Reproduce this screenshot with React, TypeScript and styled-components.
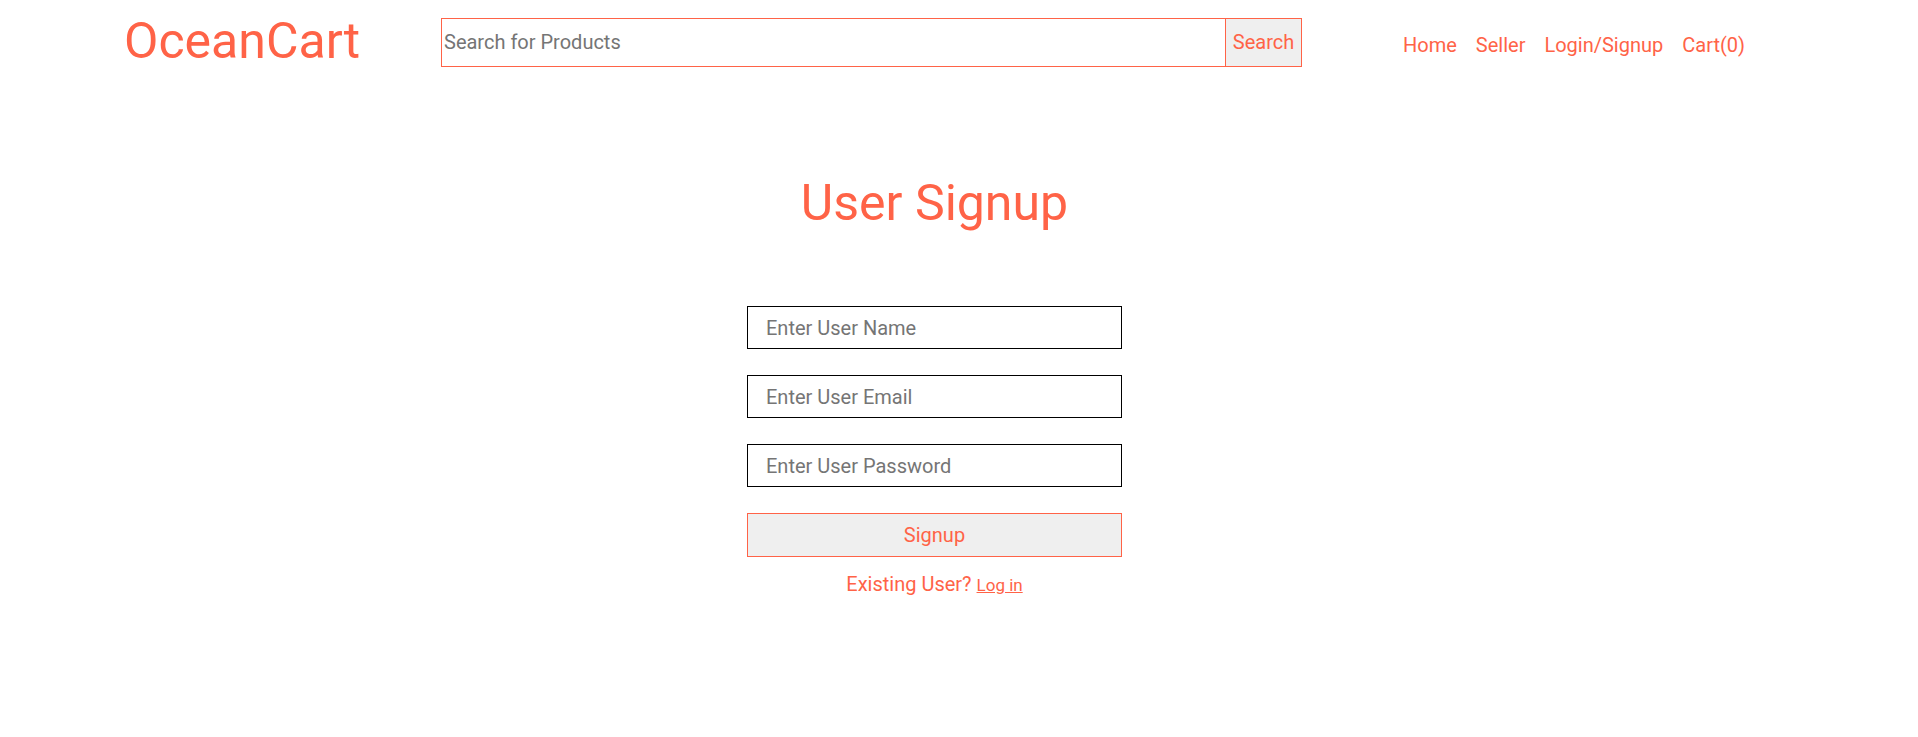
import React from "react";
import styled, { createGlobalStyle } from "styled-components";

const ACCENT = "#ff6347";

const GlobalStyle = createGlobalStyle`
  html, body { margin: 0; padding: 0; background: #fff; }
  body { font-family: Roboto, "Liberation Sans", sans-serif; }
  * { box-sizing: border-box; }
  input::placeholder { color: #757575; opacity: 1; }
`;

const Header = styled.header`
  display: flex;
  align-items: center;
  height: 84px;
  padding-left: 124px;
`;

const Logo = styled.div`
  font-size: 50px;
  color: ${ACCENT};
  width: 317px;
  margin-top: -2px;
`;

const SearchForm = styled.form`
  display: flex;
  width: 861px;
  height: 49px;
  border: 1px solid ${ACCENT};
`;

const SearchInput = styled.input`
  flex: 1;
  border: none;
  outline: none;
  font-family: inherit;
  font-size: 20px;
  padding: 0 2px;
  color: #333;
  background: #fff;
`;

const SearchButton = styled.button`
  width: 76px;
  border: none;
  border-left: 1px solid ${ACCENT};
  background: #efefef;
  color: ${ACCENT};
  font-family: inherit;
  font-size: 20px;
  padding: 0;
  cursor: pointer;
`;

const Nav = styled.nav`
  display: flex;
  gap: 19px;
  margin-left: 101px;
  margin-top: 6px;
`;

const NavLink = styled.a`
  color: ${ACCENT};
  font-size: 20px;
  text-decoration: none;
`;

const Main = styled.main`
  display: flex;
  flex-direction: column;
  align-items: center;
  padding-right: 49px;
`;

const Title = styled.h1`
  font-weight: 400;
  font-size: 50px;
  color: ${ACCENT};
  margin: 89px 0 0;
  line-height: 60px;
`;

const Form = styled.form`
  display: flex;
  flex-direction: column;
  width: 375px;
  gap: 26px;
  margin-top: 73px;
`;

const Field = styled.input`
  height: 43px;
  border: 1px solid #000;
  padding: 0 18px;
  font-family: inherit;
  font-size: 20px;
  outline: none;
  background: #fff;
`;

const SubmitButton = styled.button`
  height: 44px;
  border: 1px solid ${ACCENT};
  background: #efefef;
  color: ${ACCENT};
  font-family: inherit;
  font-size: 20px;
  cursor: pointer;
`;

const Footnote = styled.p`
  margin: 15px 0 0;
  color: ${ACCENT};
  font-size: 20px;
  text-align: center;
`;

const LoginLink = styled.a`
  color: ${ACCENT};
  font-size: 17px;
  text-decoration: underline;
`;

export default function App() {
  return (
    <>
      <GlobalStyle />
      <Header>
        <Logo>OceanCart</Logo>
        <SearchForm onSubmit={(e) => e.preventDefault()}>
          <SearchInput placeholder="Search for Products" />
          <SearchButton type="submit">Search</SearchButton>
        </SearchForm>
        <Nav>
          <NavLink href="#">Home</NavLink>
          <NavLink href="#">Seller</NavLink>
          <NavLink href="#">Login/Signup</NavLink>
          <NavLink href="#">Cart(0)</NavLink>
        </Nav>
      </Header>
      <Main>
        <Title>User Signup</Title>
        <Form onSubmit={(e) => e.preventDefault()}>
          <Field type="text" placeholder="Enter User Name" />
          <Field type="email" placeholder="Enter User Email" />
          <Field type="password" placeholder="Enter User Password" />
          <SubmitButton type="submit">Signup</SubmitButton>
        </Form>
        <Footnote>
          Existing User? <LoginLink href="#">Log in</LoginLink>
        </Footnote>
      </Main>
    </>
  );
}
